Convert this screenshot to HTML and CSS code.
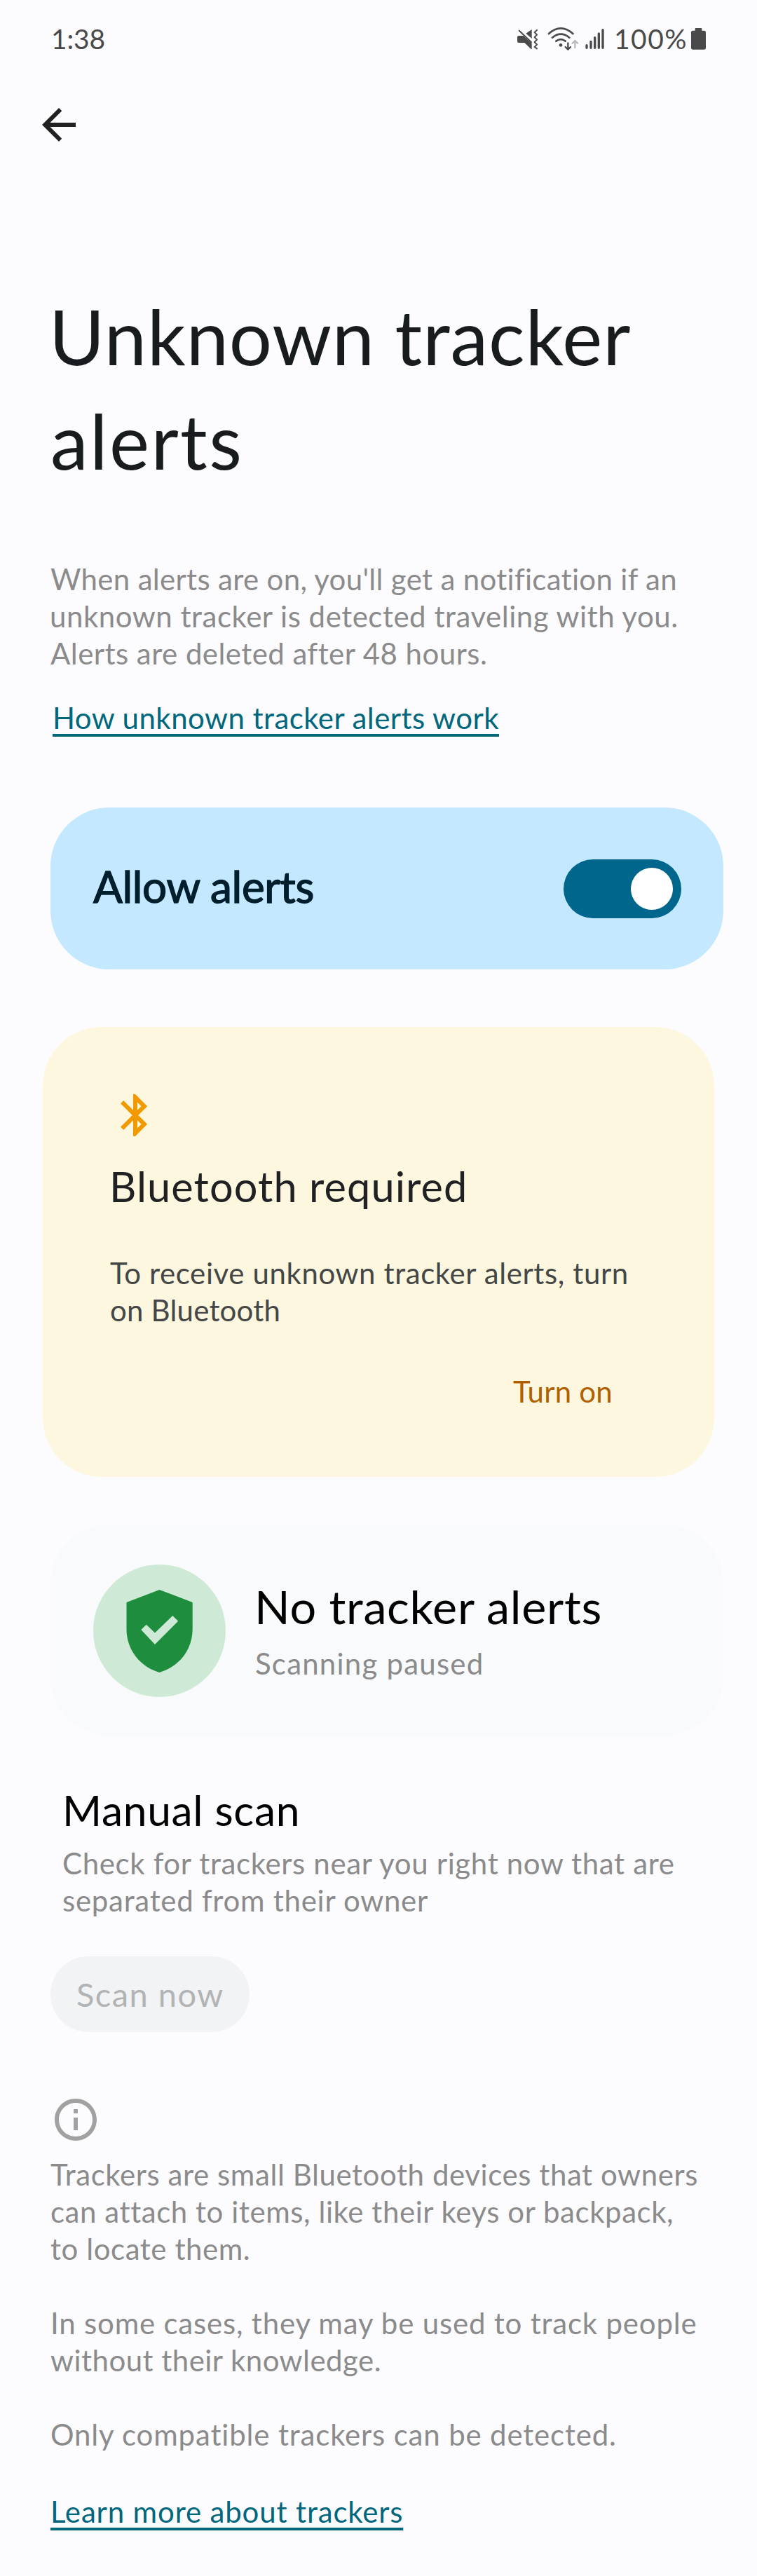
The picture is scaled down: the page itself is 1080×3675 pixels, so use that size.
FILE: index.html
```html
<!DOCTYPE html>
<html lang="en">
<head>
<meta charset="utf-8">
<title>Unknown tracker alerts</title>
<link rel="stylesheet" href="styles.css">
</head>
<body>
<header class="status">
  <span class="clock">1:38</span>
  <div class="status-icons">
    <svg class="mute" viewBox="108 54 99 105" width="33" height="35">
      <path fill="#4a4a4a" d="M151 83 176 66V105Z M120 93H140L176 126V150H173L145 123H120Q114 123 114 117V99Q114 93 120 93Z"/>
      <path fill="none" stroke="#4a4a4a" stroke-width="6" stroke-linecap="round" d="M122 71 174 121"/>
      <path fill="none" stroke="#4a4a4a" stroke-width="6" stroke-linecap="round" stroke-linejoin="round" d="M198 69 188 78 198 89 188 99 198 110 188 120 198 131 188 141 198 148"/>
    </svg>
    <svg class="wifi" viewBox="240 54 138 105" width="46" height="35">
      <g fill="none" stroke="#4a4a4a" stroke-width="8" stroke-linecap="round">
        <path d="M249 84Q300 38 352 84M264 101Q300 71 337 101M280 116Q300 101 320 116"/>
        <path stroke-width="7" stroke-linejoin="round" d="M331 124V151M320 141 331 152 342 141"/>
        <path stroke="#b9b9ba" stroke-width="7" stroke-linejoin="round" d="M361 144V115M350 125 361 114 372 125"/>
      </g>
      <circle cx="300" cy="133" r="7" fill="#4a4a4a"/>
    </svg>
    <svg class="signal" viewBox="402 54 90 105" width="30" height="35">
      <path fill="none" stroke="#4a4a4a" stroke-width="10" stroke-linecap="round" d="M411 134V145M429 118V145M446 101V145M463 84V145M480 68V145"/>
    </svg>
    <span class="level">100%</span>
    <svg class="battery" viewBox="855 54 69 105" width="23" height="35">
      <path fill="#4a4a4a" d="M878 60H901Q904 60 904 63V71H913Q921 71 921 79V144Q921 152 913 152H866Q858 152 858 144V79Q858 71 866 71H875V63Q875 60 878 60Z"/>
    </svg>
  </div>
</header>

<nav class="toolbar">
  <svg viewBox="0 0 24 24" width="72" height="72"><path fill="#212121" d="M20 11H7.83l5.59-5.59L12 4l-8 8 8 8 1.41-1.41L7.83 13H20z"/></svg>
</nav>

<main>
  <h1 class="title"><span class="line t1">Unknown tracker</span><span class="line t2">alerts</span></h1>

  <p class="text intro">
    <span class="line i1">When alerts are on, you'll get a notification if an</span>
    <span class="line i2">unknown tracker is detected traveling with you.</span>
    <span class="line i3">Alerts are deleted after 48 hours.</span>
  </p>
  <p class="text how"><a class="link h1l" href="#">How unknown tracker alerts work</a></p>

  <section class="card allow">
    <span class="allow-label">Allow alerts</span>
    <span class="switch"><span class="thumb"></span></span>
  </section>

  <section class="card bluetooth">
    <svg class="bt-icon" viewBox="0 0 24 24" width="72" height="72"><path fill="#f29900" d="M17.71 7.71L12 2h-1v7.59L6.41 5 5 6.41 10.59 12 5 17.59 6.41 19 11 14.41V22h1l5.71-5.71-4.3-4.29 4.3-4.29zM13 5.83l1.88 1.88L13 9.59V5.83zm1.88 10.46L13 18.17v-3.76l1.88 1.88z"/></svg>
    <h2 class="bt-title">Bluetooth required</h2>
    <p class="text bt-text">
      <span class="line b1">To receive unknown tracker alerts, turn</span>
      <span class="line b2">on Bluetooth</span>
    </p>
    <a class="text turn-on">Turn on</a>
  </section>

  <section class="card result">
    <svg class="shield" viewBox="0 0 189 189" width="189" height="189">
      <circle cx="94.5" cy="94.5" r="94.5" fill="#ceead6"/>
      <path fill="#1e8e3e" d="M94.5 36 141.7 54V92C141.7 122 122 146 94.5 154 67 146 47.5 122 47.5 92V54Z"/>
      <path fill="#ceead6" d="M68.3 93 75.7 85.7 88 97.5 113.3 73 121.2 80.7 88 114Z"/>
    </svg>
    <div>
      <h2 class="result-title">No tracker alerts</h2>
      <p class="text result-sub">Scanning paused</p>
    </div>
  </section>

  <section class="manual">
    <h2 class="manual-title">Manual scan</h2>
    <p class="text">
      <span class="line m1">Check for trackers near you right now that are</span>
      <span class="line m2">separated from their owner</span>
    </p>
  </section>
  <button class="scan" disabled>Scan now</button>

  <footer class="info">
    <svg class="info-icon" viewBox="0 0 24 24" width="72" height="72"><path fill="#a1a1a1" d="M11 7h2v2h-2zm0 4h2v6h-2zm1-9C6.48 2 2 6.48 2 12s4.48 10 10 10 10-4.48 10-10S17.52 2 12 2zm0 18c-4.41 0-8-3.59-8-8s3.59-8 8-8 8 3.59 8 8-3.59 8-8 8z"/></svg>
    <p class="text">
      <span class="line f1">Trackers are small Bluetooth devices that owners</span>
      <span class="line f2">can attach to items, like their keys or backpack,</span>
      <span class="line f3">to locate them.</span>
    </p>
    <p class="text">
      <span class="line f4">In some cases, they may be used to track people</span>
      <span class="line f5">without their knowledge.</span>
    </p>
    <p class="text"><span class="line f6">Only compatible trackers can be detected.</span></p>
    <p class="text learn"><a class="link f7" href="#">Learn more about trackers</a></p>
  </footer>
</main>
</body>
</html>
```
FILE: styles.css
```css
* { box-sizing: border-box; }
html, body { margin: 0; }
body {
  width: 1080px;
  height: 3675px;
  overflow: hidden;
  background: #fcfcff;
  font-family: Lato, "Open Sans", sans-serif;
  font-variant-ligatures: none;
}
h1, h2, p { margin: 0; font-weight: 400; }
svg { display: block; flex: none; }
.line { display: block; white-space: nowrap; }

.status {
  display: flex;
  justify-content: space-between;
  height: 142px;
  padding: 32px 72px 0;
  font-size: 39px;
  line-height: 47px;
  color: #4a4a4a;
}
.clock { padding-left: 1px; letter-spacing: -0.2px; }
.status-icons { display: flex; align-items: center; height: 47px; }
.wifi { margin-left: 11px; }
.signal { margin-left: 8px; }
.level { width: 109px; margin-left: 12px; letter-spacing: 1.48px; }

.toolbar { padding-left: 48px; height: 263px; }

main { display: flex; flex-direction: column; padding: 0 48px 0 72px; }

.title { margin-left: -1px; font-size: 108px; line-height: 149px; color: #191c1e; }
.t1 { letter-spacing: .9px; margin-left: -1px; }
.t2 { letter-spacing: 2.4px; margin-left: 1px; }

.text { font-size: 42px; line-height: 53px; color: #8b8b8c; }
p.text { padding-top: 2px; margin-bottom: -2px; }
.intro { margin-top: 95px; }
.i1 { letter-spacing: .31px; }
.i2 { letter-spacing: .52px; margin-left: -1px; }
.i3 { letter-spacing: .45px; }
.how { margin: 39px 0 0 3px; }
.link {
  color: #00677d;
  text-decoration: underline 3.5px;
  text-underline-offset: 6.5px;
  text-decoration-skip-ink: none;
}
.h1l { letter-spacing: .45px; }

.card { width: 960px; border-radius: 84px; }
.allow {
  display: flex;
  align-items: center;
  justify-content: space-between;
  height: 231px;
  margin-top: 103px;
  padding: 0 60px 0 61px;
  background: #c3e8ff;
}
.allow-label {
  padding-bottom: 7px;
  font-size: 62px;
  line-height: 74px;
  letter-spacing: -.33px;
  color: #001e2c;
  -webkit-text-stroke: 1.4px #001e2c;
}
.switch {
  display: flex;
  justify-content: flex-end;
  width: 168px;
  height: 84px;
  padding: 12px;
  border-radius: 42px;
  background: #00668b;
}
.thumb { width: 60px; height: 60px; border-radius: 50%; background: #fff; }

.bluetooth {
  display: flex;
  flex-direction: column;
  width: 958px;
  height: 642px;
  margin: 82px 0 0 -11px;
  padding: 90px 96px 0;
  background: #fef7e0;
}
.bt-title {
  margin: 29px 0 60px -1px;
  font-size: 59.5px;
  line-height: 72px;
  letter-spacing: 1.08px;
  color: #202122;
}
.bt-text { color: #444746; }
.b1 { letter-spacing: .6px; }
.b2 { letter-spacing: .19px; }
.turn-on { align-self: flex-end; width: 191px; margin-top: 65px; letter-spacing: .2px; color: #b06000; }

.result {
  display: flex;
  align-items: center;
  gap: 42px;
  height: 302px;
  margin-top: 68px;
  padding-left: 61px;
  background: #f8fafb;
}
.result-title { margin: -3px 0 14px -1px; font-size: 66.5px; line-height: 80px; letter-spacing: .68px; color: #000; }
.result-sub { letter-spacing: 1.21px; }

.manual { margin: 69px 0 55px 17px; }
.manual-title { margin-bottom: 12px; font-size: 60.5px; line-height: 72px; letter-spacing: .69px; color: #000; }
.m1 { letter-spacing: .64px; }
.m2 { letter-spacing: .72px; }

.scan {
  width: 284px;
  height: 108px;
  padding: 0 0 0 37px;
  border: 0;
  border-radius: 54px;
  background: #f1f3f4;
  font: 47px/56px Lato, sans-serif;
  letter-spacing: 1.46px;
  text-align: left;
  color: #b1b3b4;
}

.info { display: flex; flex-direction: column; gap: 53px; margin-top: 89px; }
.info-icon { margin-bottom: -39px; }
.f1 { letter-spacing: .57px; }
.f2 { letter-spacing: .56px; }
.f3 { letter-spacing: .56px; }
.f4 { letter-spacing: .8px; }
.f5 { letter-spacing: .46px; }
.f6 { letter-spacing: .83px; }
.learn { margin-top: 4px; }
.f7 { letter-spacing: .84px; }
```
